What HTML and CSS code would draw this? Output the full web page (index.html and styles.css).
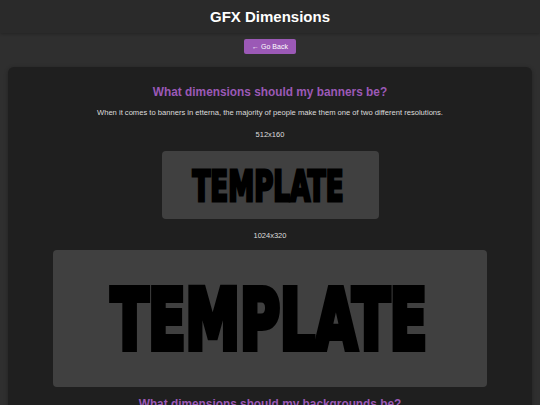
FILE: index.html
```html
<!DOCTYPE html>
<html lang="en">
<head>
<meta charset="utf-8">
<title>GFX Dimensions</title>
<link rel="stylesheet" href="styles.css">
</head>
<body>
<header class="topbar">
  <h1 class="title">GFX Dimensions</h1>
</header>
<nav class="nav">
  <a class="back-btn" href="#">&larr; Go Back</a>
</nav>
<main class="card">
  <h2 class="section-title">What dimensions should my banners be?</h2>
  <p class="intro">When it comes to banners in etterna, the majority of people make them one of two different resolutions.</p>
  <div class="res-label">512x160</div>
  <div class="banner banner-small">
    <svg class="banner-svg" viewBox="0 0 217 68" width="217" height="68">
      <text x="30.5" y="49.5" textLength="151" lengthAdjust="spacingAndGlyphs" class="tpl tpl-small">TEMPLATE</text>
    </svg>
  </div>
  <div class="res-label">1024x320</div>
  <div class="banner banner-large">
    <svg class="banner-svg" viewBox="0 0 434 137" width="434" height="137">
      <text x="58" y="99" textLength="316" lengthAdjust="spacingAndGlyphs" class="tpl tpl-large">TEMPLATE</text>
    </svg>
  </div>
  <h2 class="section-title section-next">What dimensions should my backgrounds be?</h2>
</main>
</body>
</html>
```
FILE: styles.css
```css
html, body {
  margin: 0;
  padding: 0;
}
body {
  background: #2f2f2f;
  font-family: "Liberation Sans", Arial, sans-serif;
  color: #dddddd;
  height: 405px;
  overflow: hidden;
}
.topbar {
  height: 33px;
  background: #2a2a2a;
  display: flex;
  align-items: center;
  justify-content: center;
  box-shadow: 0 1px 3px rgba(0,0,0,0.25);
}
.title {
  margin: 0;
  font-size: 15px;
  line-height: 18px;
  font-weight: bold;
  color: #ffffff;
}
.nav {
  display: flex;
  justify-content: center;
  padding-top: 6px;
}
.back-btn {
  display: flex;
  align-items: center;
  justify-content: center;
  width: 52px;
  height: 15px;
  background: #9b59b6;
  color: #ffffff;
  font-size: 7px;
  border-radius: 2px;
  text-decoration: none;
}
.card {
  margin: 13px 8px 0;
  background: #1f1f1f;
  border-radius: 6px;
  box-shadow: 0 1px 4px rgba(0,0,0,0.3);
  display: flex;
  flex-direction: column;
  align-items: center;
  padding-bottom: 20px;
}
.section-title {
  margin: 18px 0 0;
  font-size: 11.85px;
  line-height: 14px;
  font-weight: bold;
  color: #9b59b6;
}
.section-next {
  margin-top: 10px;
}
.intro {
  margin: 9px 0 0;
  font-size: 7.6px;
  line-height: 10px;
  color: #dddddd;
}
.res-label {
  margin-top: 12px;
  font-size: 7.5px;
  line-height: 10px;
  color: #dddddd;
}
.banner {
  background: #404040;
  border-radius: 4px;
  overflow: hidden;
}
.banner-small {
  margin-top: 11px;
  width: 217px;
  height: 68px;
}
.banner-large {
  margin-top: 9px;
  width: 434px;
  height: 137px;
}
.banner-svg {
  display: block;
}
.tpl {
  font-family: "DejaVu Sans Condensed", "Liberation Sans Narrow", "DejaVu Sans", sans-serif;
  font-weight: bold;
  fill: #000000;
  stroke: #000000;
  stroke-linejoin: miter;
}
.tpl-small {
  font-size: 43.5px;
  stroke-width: 3px;
}
.tpl-large {
  font-size: 84px;
  stroke-width: 6px;
}
```
